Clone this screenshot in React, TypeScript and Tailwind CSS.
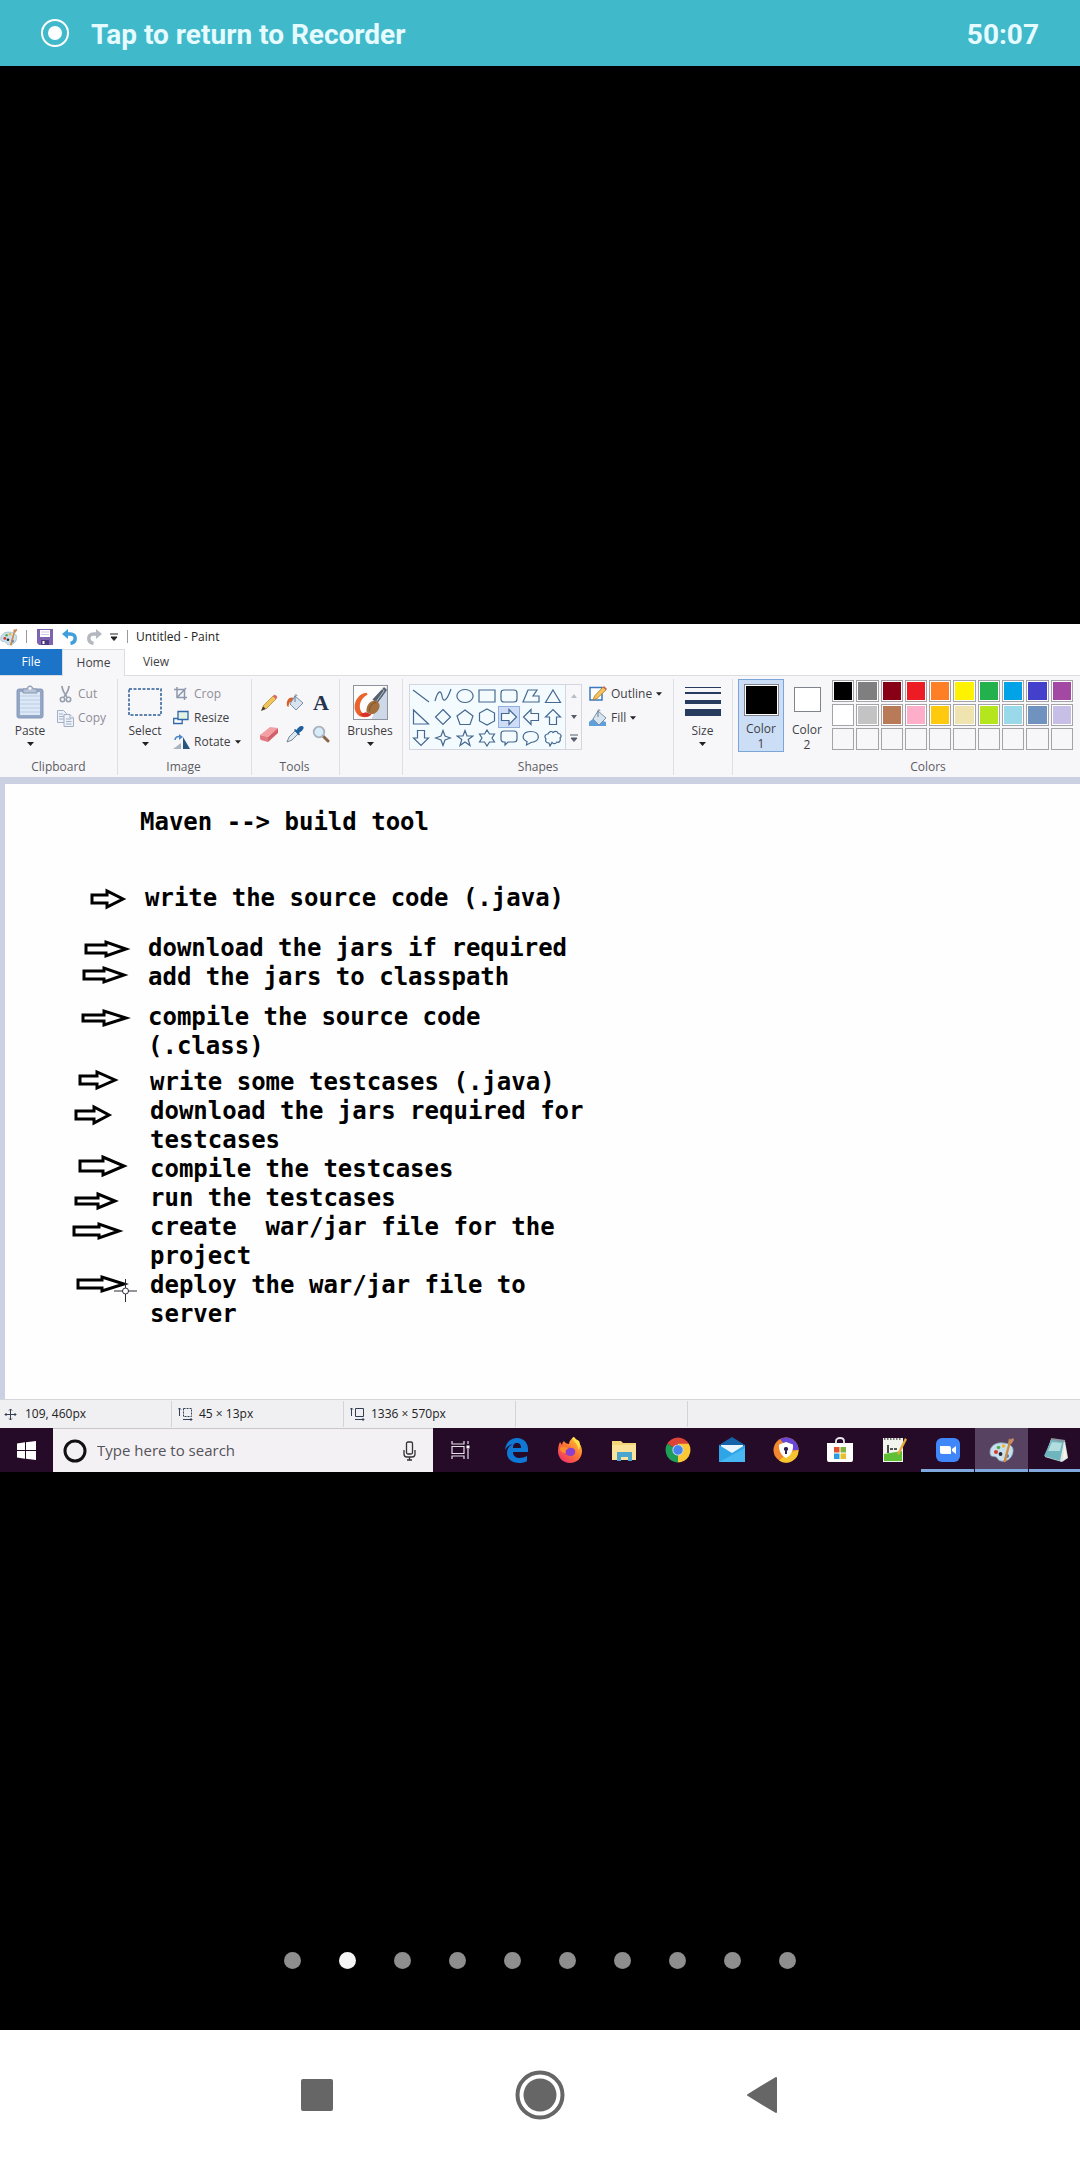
import type { ReactNode } from "react";

const ui = "font-['Open_Sans','Noto_Sans',sans-serif]";

function Caret({ small }: { small?: boolean }) {
  return (
    <svg width={small ? 6 : 7} height="4" viewBox="0 0 7 4" aria-hidden="true" className="shrink-0">
      <path d="M0 0h7L3.5 4z" fill="#222" />
    </svg>
  );
}

function PaletteIcon({ size }: { size: number }) {
  return (
    <svg width={size} height={size} viewBox="0 0 26 26" aria-hidden="true" className="shrink-0">
      <path d="M1 15C1 9 7 5 14 6c7 0 11 4 10 9-1 7-7 10-12 9-3 0-3-3-5-4s-6 1-6-5z" fill="#c9dfee" stroke="#8aa5b8" strokeWidth="0.8" />
      <circle cx="7" cy="15" r="2" fill="#d8372c" />
      <circle cx="9.500" cy="10.500" r="1.800" fill="#4fb04a" />
      <circle cx="14.500" cy="9" r="1.700" fill="#f3b52a" />
      <circle cx="11.500" cy="17" r="1.900" fill="#23272f" />
      <circle cx="18" cy="19" r="2" fill="#3a7fd0" />
      <path d="M14.500 24L19.500 6l2 .6L17 24.500c-.5 1.200-2.500 1-2.500-.5z" fill="#d08a3c" />
      <path d="M19 6.500l1-5 1.500 1L24 1l1 2-2.700 4z" fill="#c98d5b" />
    </svg>
  );
}

function SaveIcon() {
  return (
    <svg width="16" height="16" viewBox="0 0 16 16" aria-hidden="true">
      <path d="M0 0h16v16H2l-2-2z" fill="#7d63b0" />
      <path d="M3 1h10v7H3z" fill="#fff" />
      <path d="M4 3h8M4 5.500h8" stroke="#cfc6e2" />
      <path d="M4 11h8v5H4z" fill="#4e3a80" />
      <path d="M5.500 12h2v3h-2z" fill="#fff" />
    </svg>
  );
}

function UndoIcon() {
  return (
    <svg width="16" height="16" viewBox="0 0 16 16" aria-hidden="true">
      <path d="M4 5h4.500c6 0 6.500 8 0 9.500" fill="none" stroke="#3f9fdc" strokeWidth="3.500" />
      <path d="M0 5l6-5v10z" fill="#3f9fdc" />
    </svg>
  );
}

function RedoIcon() {
  return (
    <svg width="16" height="16" viewBox="0 0 16 16" aria-hidden="true">
      <path d="M12 5H7.500c-6 0-6.500 8 0 9.500" fill="none" stroke="#b4b8bf" strokeWidth="3.500" />
      <path d="M16 5l-6-5v10z" fill="#b4b8bf" />
    </svg>
  );
}

function ClipboardIcon() {
  return (
    <svg width="28" height="34" viewBox="0 0 28 34" aria-hidden="true">
      <rect x="1" y="4" width="26" height="29" rx="2" fill="#93a6c6" stroke="#8799b8" />
      <path d="M4 7h20v23H4z" fill="#dde8f6" />
      <path d="M4 11h20M4 15h20M4 19h20M4 23h20M4 27h20" stroke="#bccce4" />
      <path d="M7 8V4h4c0-4 6-4 6 0h4v4z" fill="#b7c3d7" stroke="#8796b0" />
      <circle cx="14" cy="3.500" r="1.300" fill="#fff" />
    </svg>
  );
}

function CutIcon() {
  return (
    <svg width="17" height="17" viewBox="0 0 17 17" aria-hidden="true" fill="none" stroke="#99a0ad">
      <path d="M5 0c0 4 2 7 5 11M12 0c0 4-2 7-5 11" strokeWidth="1.800" />
      <circle cx="5.500" cy="13.500" r="2.200" strokeWidth="1.600" />
      <circle cx="11.500" cy="13.500" r="2.200" strokeWidth="1.600" />
    </svg>
  );
}

function CopyIcon() {
  return (
    <svg width="17" height="17" viewBox="0 0 17 17" aria-hidden="true" fill="#eef2f9" stroke="#a3aec4">
      <path d="M.5.500h6l3 3v9h-9z" />
      <path d="M2 4h4M2 6.500h5M2 9h5" />
      <path d="M7 4.500h6l3.500 3.500v8.500H7z" />
      <path d="M9 9h5M9 11.500h5.500M9 14h5.500M13 4.500V8h3.500" />
    </svg>
  );
}

function CropIcon() {
  return (
    <svg width="16" height="16" viewBox="0 0 16 16" aria-hidden="true" fill="none" stroke="#8d97ab" strokeWidth="1.500">
      <path d="M4 1v10.500h10M1 3.500h10.500V14M5 10.500l8-8.500" />
    </svg>
  );
}

function ResizeIcon() {
  return (
    <svg width="16" height="16" viewBox="0 0 16 16" aria-hidden="true" stroke="#3267a8" strokeWidth="1.300">
      <path d="M.7 8.500h8.500v5H.7z" fill="#fff" />
      <path d="M5 1.500h10v8H5z" fill="#e2f5e4" />
    </svg>
  );
}

function RotateIcon() {
  return (
    <svg width="17" height="16" viewBox="0 0 17 16" aria-hidden="true">
      <path d="M0 15h8V9z" fill="#a9b4c2" />
      <path d="M10 15h7L10 3z" fill="#27577f" />
      <path d="M2 6c0-3 3-4 5-3" fill="none" stroke="#4f86c6" strokeWidth="1.500" />
      <path d="M6 0l4 3-4 3z" fill="#4f86c6" />
    </svg>
  );
}

function PencilIcon() {
  return (
    <svg width="18" height="18" viewBox="0 0 18 18" aria-hidden="true">
      <path d="M1 17l2-5 3 3z" fill="#4d3b29" />
      <path d="M3 12L13 2l3 3L6 15z" fill="#f2c55c" stroke="#b98b33" strokeWidth="0.800" />
      <path d="M13 2l1-1c1-1 4 2 3 3l-1 1z" fill="#d9666b" />
    </svg>
  );
}

function BucketIcon({ tray }: { tray?: boolean }) {
  return (
    <svg width="18" height="18" viewBox="0 0 18 18" aria-hidden="true">
      {tray && <path d="M0 13l5-4 12 4v4H0z" fill="#5f9fdc" />}
      {!tray && <path d="M1 12C0 6 3 2 8 4L5 8C3 8 3 10 2.500 13z" fill="#d9622b" />}
      <path d="M9 2l8 7-7 7-6-6z" fill="#d7e4ef" stroke="#7890a8" />
      <path d="M9 8V1.500c0-1 2-1 2 .5" fill="none" stroke="#6b7d90" />
    </svg>
  );
}

function EraserIcon() {
  return (
    <svg width="18" height="18" viewBox="0 0 18 18" aria-hidden="true">
      <path d="M0 10l10-8 8 1-10 9z" fill="#f3a0a4" />
      <path d="M0 10l8 2v5l-7-2c-1 0-1-3-1-5z" fill="#e27880" />
      <path d="M8 12L18 3v5l-10 9z" fill="#d4606a" />
    </svg>
  );
}

function PickerIcon() {
  return (
    <svg width="18" height="18" viewBox="0 0 18 18" aria-hidden="true">
      <path d="M1 17l2-5 6-6 3 3-6 6z" fill="#dce8f2" stroke="#7b8794" />
      <path d="M8 5l1-1 1.500 1C12 2 15 0 17 1.500S16 6 13 8l1 1.500-1 1z" fill="#1f5f9e" />
    </svg>
  );
}

function MagnifierIcon() {
  return (
    <svg width="18" height="18" viewBox="0 0 18 18" aria-hidden="true">
      <path d="M11 11l5 5" stroke="#8a6648" strokeWidth="3" strokeLinecap="round" />
      <circle cx="7" cy="7" r="5.300" fill="#d8ebf8" stroke="#a9b2bd" strokeWidth="1.800" />
    </svg>
  );
}

function BrushIcon() {
  return (
    <svg width="33" height="33" viewBox="0 0 34 34" aria-hidden="true">
      <rect width="34" height="34" fill="#fdfdfe" />
      <path d="M34 0v34H18l8-18z" fill="#cdd8e8" />
      <path d="M13 7C3 8-2 20 2 27s12 6 15 3c-7 0-11-3-11-9S10 11 14 9z" fill="#e9642c" />
      <path d="M6 29c4 4 10 3 12 0l-6-2z" fill="#d9302c" />
      <path d="M31 1l3 3-10 14-5-4z" fill="#56616f" />
      <path d="M29 3l2 2-8 11" stroke="#b9c4d0" fill="none" />
      <path d="M13 27c-1-7 4-13 10-12 5 3 4 9 0 12-3 3-7 2-10 0z" fill="#a3703d" />
      <path d="M16 26c0-5 3-9 7-9" stroke="#7b4f27" fill="none" />
    </svg>
  );
}

function OutlineIcon() {
  return (
    <svg width="18" height="18" viewBox="0 0 18 18" aria-hidden="true">
      <path d="M1 2.500h12V15H1z" fill="#fff" stroke="#3a79bd" strokeWidth="1.500" />
      <path d="M4 15l1.500-4L14 2l3 3-9 8.500z" fill="#f2c55c" stroke="#a8792c" strokeWidth="0.800" />
      <path d="M14 2l1-1 3 3-1 1z" fill="#cf5a60" />
    </svg>
  );
}

const shapes: { name: string; d: string }[] = [
  { name: "Line", d: "M1 3l16 12" },
  { name: "Curve", d: "M1 14C4 3 7 3 8 9s4 7 9-7" },
  { name: "Oval", d: "M9 2.500a8 6.500 0 1 0 .01 0z" },
  { name: "Rectangle", d: "M1 3h16v12H1z" },
  { name: "Rounded rectangle", d: "M4 3h10q3 0 3 3v6q0 3-3 3H4q-3 0-3-3V6q0-3 3-3z" },
  { name: "Polygon", d: "M6 3h9l-4 6h6v6H1z" },
  { name: "Triangle", d: "M9 3l7.500 12.500h-15z" },
  { name: "Right triangle", d: "M1.500 2v14h15z" },
  { name: "Diamond", d: "M9 1.500l7.500 7.500L9 16.500 1.500 9z" },
  { name: "Pentagon", d: "M9 2l8 6-3 8.500H4L1 8z" },
  { name: "Hexagon", d: "M9 1l7.500 4v8L9 17l-7.500-4V5z" },
  { name: "Right arrow", d: "M1.500 5.500H9V1.500L16.500 9 9 16.500v-4H1.500z" },
  { name: "Left arrow", d: "M16.500 5.500H9V1.500L1.500 9 9 16.500v-4h7.500z" },
  { name: "Up arrow", d: "M5.500 16.500V9H1.500L9 1.500 16.500 9h-4v7.500z" },
  { name: "Down arrow", d: "M5.500 1.500V9H1.500L9 16.500 16.500 9h-4V1.500z" },
  { name: "Four-point star", d: "M9 1.500l2 5.500 5.500 2-5.500 2-2 5.500L7 11 1.500 9 7 7z" },
  { name: "Five-point star", d: "M9 1.500l2 5.500h6l-4.800 3.500 1.800 6L9 13l-5 3.500 1.800-6L1 7h6z" },
  { name: "Six-point star", d: "M9 1l2.500 4H16.500L14 9l2.500 4h-5L9 17l-2.500-4h-5L4 9 1.500 5h5z" },
  { name: "Rounded callout", d: "M4 2h10q3 0 3 3v5q0 3-3 3H8l-3 3v-3H4q-3 0-3-3V5q0-3 3-3z" },
  { name: "Oval callout", d: "M5 12.500C-1 10 0 2.500 9 2.500s10.500 10 0 11L4.500 16z" },
  { name: "Cloud callout", d: "M5 14c-3 0-4-2-3-4C0 8 1 5 4 5c1-3 4-3 5-1.500C12 1 14 3 14 4.500c3 0 4 3 2 4.500 1 3-1 5-3 4-1 2-4 2-5 .5L6 17z" },
];

function ShapeGallery() {
  return (
    <div className="flex h-[66px] border border-[#d3d6df] bg-[#f4fbff]">
      <div className="grid grid-cols-7 grid-rows-3">
        {shapes.map((s) => (
          <button
            key={s.name}
            type="button"
            aria-label={s.name}
            className={
              s.name === "Right arrow"
                ? "flex w-[22px] items-center justify-center bg-[#cfdcf8] outline outline-[#8fb0dc] -outline-offset-1"
                : "flex w-[22px] items-center justify-center"
            }
          >
            <svg width="18" height="18" viewBox="0 0 18 18" aria-hidden="true">
              <path d={s.d} fill={s.name === "Line" || s.name === "Curve" ? "none" : "#f4fbff"} stroke="#44688f" strokeWidth="1.200" />
            </svg>
          </button>
        ))}
      </div>
      <div className="ml-px flex w-[16px] flex-col border-l border-[#d3d6df] bg-[#f7f7fa]">
        <button type="button" aria-label="Scroll shapes up" className="flex flex-1 items-center justify-center">
          <svg width="6" height="4" viewBox="0 0 6 4"><path d="M0 4h6L3 0z" fill="#b9bcc4" /></svg>
        </button>
        <button type="button" aria-label="Scroll shapes down" className="flex flex-1 items-center justify-center">
          <svg width="6" height="4" viewBox="0 0 6 4"><path d="M0 0h6L3 4z" fill="#555c6b" /></svg>
        </button>
        <button type="button" aria-label="More shapes" className="flex flex-1 items-center justify-center">
          <svg width="8" height="8" viewBox="0 0 8 8"><path d="M0 1h8M1 4h6L4 7.500z" fill="#555c6b" stroke="#555c6b" /></svg>
        </button>
      </div>
    </div>
  );
}

function Group({ label, className, labelClass = "", children }: { label?: string; className: string; labelClass?: string; children: ReactNode }) {
  return (
    <section aria-label={label} className={`flex h-[96px] flex-col justify-between ${className}`}>
      <div className="flex items-start">{children}</div>
      {label && <h2 className={`text-center text-[12px] leading-4 text-[#5b5b60] ${labelClass}`}>{label}</h2>}
    </section>
  );
}

function BigButton({ icon, label, className }: { icon: ReactNode; label: string; className: string }) {
  return (
    <button type="button" className={`flex flex-col items-center pt-[5px] ${className}`}>
      <span className="flex h-[36px] items-center">{icon}</span>
      <span className="mt-[3px] leading-4">{label}</span>
      <span className="flex h-[10px] items-center"><Caret /></span>
    </button>
  );
}

function SmallButton({ icon, label, caret, disabled }: { icon: ReactNode; label: string; caret?: boolean; disabled?: boolean }) {
  return (
    <button
      type="button"
      disabled={disabled}
      className={disabled ? "flex h-[24px] items-center gap-1 text-[#8e8e96]" : "flex h-[24px] items-center gap-1"}
    >
      <span className="flex w-[18px] justify-center">{icon}</span>
      {label}
      {caret && <Caret small />}
    </button>
  );
}

const palette = [
  ["Black", "bg-[#000000]"], ["Gray", "bg-[#7f7f7f]"], ["Dark red", "bg-[#880015]"], ["Red", "bg-[#ed1c24]"], ["Orange", "bg-[#ff7f27]"],
  ["Yellow", "bg-[#fff200]"], ["Green", "bg-[#22b14c]"], ["Turquoise", "bg-[#00a2e8]"], ["Indigo", "bg-[#4340cc]"], ["Purple", "bg-[#a349a4]"],
  ["White", "bg-[#ffffff]"], ["Light gray", "bg-[#c3c3c3]"], ["Brown", "bg-[#b97a57]"], ["Rose", "bg-[#ffaec9]"], ["Gold", "bg-[#ffc90e]"],
  ["Light yellow", "bg-[#efe4b0]"], ["Lime", "bg-[#b5e61d]"], ["Light turquoise", "bg-[#99d9ea]"], ["Blue-gray", "bg-[#7092be]"], ["Lavender", "bg-[#c8bfe7]"],
];

function Ribbon() {
  return (
    <div className="flex h-[102px] overflow-hidden border-t border-[#dcdde2] bg-[#f7f7fa] pt-[3px] text-[12px] text-[#3f3f44]">
      <Group label="Clipboard" className="w-[118px] shrink-0 border-r border-[#dedfe5]">
        <BigButton icon={<ClipboardIcon />} label="Paste" className="ml-[12px] w-[36px]" />
        <div className="ml-[8px] flex flex-col pt-[3px]">
          <SmallButton icon={<CutIcon />} label="Cut" disabled />
          <SmallButton icon={<CopyIcon />} label="Copy" disabled />
        </div>
      </Group>
      <Group label="Image" className="w-[134px] shrink-0 border-r border-[#dedfe5]" labelClass="pr-[2px]">
        <BigButton
          icon={<svg width="34" height="28" viewBox="0 0 34 28"><path d="M1 1h32v26H1z" fill="none" stroke="#2d5e96" strokeWidth="1.500" strokeDasharray="3 1.500" /></svg>}
          label="Select"
          className="ml-[6px] w-[42px]"
        />
        <div className="ml-[6px] flex flex-col pt-[3px]">
          <SmallButton icon={<CropIcon />} label="Crop" disabled />
          <SmallButton icon={<ResizeIcon />} label="Resize" />
          <SmallButton icon={<RotateIcon />} label="Rotate" caret />
        </div>
      </Group>
      <Group label="Tools" className="w-[88px] shrink-0 border-r border-[#dedfe5]" labelClass="pr-[2px]">
        <div className="grid w-full grid-cols-3 pr-[5px] pl-[4px] pt-[8px]">
          <button type="button" aria-label="Pencil" className="flex h-[31px] items-center justify-center"><PencilIcon /></button>
          <button type="button" aria-label="Fill with color" className="flex h-[31px] items-center justify-center"><BucketIcon /></button>
          <button type="button" aria-label="Text" className="flex h-[31px] items-center justify-center font-['Liberation_Serif',serif] text-[22px] font-bold text-[#24344d]">A</button>
          <button type="button" aria-label="Eraser" className="flex h-[31px] items-center justify-center"><EraserIcon /></button>
          <button type="button" aria-label="Color picker" className="flex h-[31px] items-center justify-center"><PickerIcon /></button>
          <button type="button" aria-label="Magnifier" className="flex h-[31px] items-center justify-center"><MagnifierIcon /></button>
        </div>
      </Group>
      <Group className="w-[63px] shrink-0 border-r border-[#dedfe5]">
        <BigButton icon={<span className="border border-[#8f949e]"><BrushIcon /></span>} label="Brushes" className="w-[60px]" />
      </Group>
      <Group label="Shapes" className="w-[271px] shrink-0 border-r border-[#dedfe5]">
        <div className="ml-[6px] pt-[5px]"><ShapeGallery /></div>
        <div className="ml-[7px] flex flex-col pt-[3px]">
          <SmallButton icon={<OutlineIcon />} label="Outline" caret />
          <SmallButton icon={<BucketIcon tray />} label="Fill" caret />
        </div>
      </Group>
      <Group className="w-[59px] shrink-0 border-r border-[#dedfe5]">
        <BigButton
          icon={<svg width="36" height="32" viewBox="0 0 36 32" fill="#263b5e"><path d="M0 1h36v1H0zM0 6h36v2H0zM0 14h36v4H0zM0 23h36v7H0z" /></svg>}
          label="Size"
          className="w-[57px]"
        />
      </Group>
      <Group label="Colors" className="min-w-0 flex-1" labelClass="pl-[43px]">
        <button type="button" className="ml-[5px] flex h-[73px] w-[46px] flex-col items-center border border-[#7ba7d8] bg-[#cbdef5] pt-[4px] leading-[15px]">
          <span className="mb-[5px] size-[35px] border border-[#80848c] bg-black outline outline-white -outline-offset-2" />
          <span>Color</span>
          <span>1</span>
        </button>
        <button type="button" className="flex h-[73px] w-[46px] flex-col items-center pt-[8px] leading-[15px]">
          <span className="mb-[10px] size-[27px] border border-[#80848c] bg-white" />
          <span>Color</span>
          <span>2</span>
        </button>
        <div className="ml-[2px] grid w-[241px] grid-cols-10 gap-[2px] pt-px">
          {palette.map(([name, color]) => (
            <button key={name} type="button" aria-label={name} className="h-[22px] border border-[#a4a4a8] bg-white p-px">
              <span className={`block h-full ${color}`} />
            </button>
          ))}
          {Array.from({ length: 10 }, (_, i) => (
            <button key={i} type="button" aria-label={`Custom color ${i + 1}`} className="h-[22px] border border-[#a4a4a8] bg-[#f7f7fa]" />
          ))}
        </div>
      </Group>
    </div>
  );
}

/* Block arrows on the drawing: tail x, head x, tip x, centre y, half shaft, half head. */
const arrows = [
  [87, 102, 118, 115, 4, 8],
  [81, 101, 121, 165, 4, 7],
  [79, 99, 119, 191, 4, 7],
  [78, 99, 121, 234, 3, 7],
  [75, 92, 110, 296, 4, 8],
  [71, 89, 104, 331, 4, 8],
  [75, 98, 119, 382, 5, 9],
  [71, 93, 110, 417, 3, 7],
  [69, 94, 114, 447, 4, 7],
  [73, 97, 119, 500, 4, 7],
];

function Canvas() {
  return (
    <main className="bg-[#cbd0e2] pt-[7px] pl-[5px]">
      <div className="relative h-[615px] overflow-hidden bg-[#fefefe] pt-[24px] font-['DejaVu_Sans_Mono','Liberation_Mono',monospace] text-[24px] leading-[29px] font-bold whitespace-pre text-black">
        <p className="pl-[135px]">Maven --&gt; build tool</p>
        <p className="mt-[47px] pl-[140px]">write the source code (.java)</p>
        <div className="mt-[21px] pl-[143px]">
          <p>download the jars if required</p>
          <p>add the jars to classpath</p>
        </div>
        <div className="mt-[11px] pl-[143px]">
          <p>compile the source code</p>
          <p>(.class)</p>
        </div>
        <div className="mt-[7px] pl-[145px]">
          <p>write some testcases (.java)</p>
          <p>download the jars required for</p>
          <p>testcases</p>
          <p>compile the testcases</p>
          <p>run the testcases</p>
          <p>create  war/jar file for the</p>
          <p>project</p>
          <p>deploy the war/jar file to</p>
          <p>server</p>
        </div>
        <svg width="160" height="560" viewBox="0 0 160 560" aria-hidden="true" className="absolute top-0 left-0">
          {arrows.map(([tail, head, tip, y, s, h]) => (
            <path
              key={y}
              d={`M${tail} ${y - s}H${head}V${y - h}L${tip} ${y}L${head} ${y + h}V${y + s}H${tail}Z`}
              fill="none"
              stroke="#000"
              strokeWidth="3"
            />
          ))}
          <g stroke="#2b2b38" fill="#fff">
            <path d="M109 507h23M120.500 495v23" />
            <circle cx="120.500" cy="507" r="3" />
          </g>
        </svg>
      </div>
    </main>
  );
}

function StatusBar() {
  return (
    <footer className="flex h-[29px] items-center overflow-hidden border-t border-[#d5d5da] bg-[#f0f0f3] text-[12px] text-[#222]">
      <div className="flex h-[26px] w-[172px] shrink-0 items-center gap-[8px] border-r border-[#d3d3d8] pl-[4px]">
        <svg width="13" height="13" viewBox="0 0 13 13" aria-hidden="true" fill="none" stroke="#333f55">
          <path d="M6.500 1v11M1 6.500h11M5 2.500L6.500 1 8 2.500M5 10.500L6.500 12 8 10.500M2.500 5L1 6.500 2.500 8M10.500 5L12 6.500 10.500 8" />
        </svg>
        109, 460px
      </div>
      <div className="flex h-[26px] w-[172px] shrink-0 items-center gap-[6px] border-r border-[#d3d3d8] pl-[6px]">
        <svg width="15" height="14" viewBox="0 0 15 14" aria-hidden="true" fill="none" stroke="#333f55">
          <path d="M1.500 9V1M0 2.500L1.500 1 3 2.500M5 12.500h9M12.500 11l1.500 1.500-1.500 1.500" />
          <path d="M5.500 1.500h8v8h-8z" strokeDasharray="2 1" />
        </svg>
        45 × 13px
      </div>
      <div className="flex h-[26px] w-[172px] shrink-0 items-center gap-[6px] border-r border-[#d3d3d8] pl-[6px]">
        <svg width="15" height="14" viewBox="0 0 15 14" aria-hidden="true" fill="none" stroke="#333f55">
          <path d="M1.500 9V1M0 2.500L1.500 1 3 2.500M5 12.500h9M12.500 11l1.500 1.500-1.500 1.500M5.500 1.500h8v8h-8z" />
        </svg>
        1336 × 570px
      </div>
      <div className="h-[26px] w-[172px] shrink-0 border-r border-[#d3d3d8]" />
    </footer>
  );
}

const apps: { name: string; state: string; icon: ReactNode }[] = [
  {
    name: "Edge", state: "border-transparent",
    icon: <path d="M2 13C3 4 9 1 14 1c7 0 11 5 11 11v3H10c0 4 3 6 7 6 2 0 5-1 7-2v5c-2 1.500-5 2-8 2-7 0-12-4-12-10 0-4 2-7 6-9-4 1-6 3-8 6zm8-2h8c0-3-1-5-4-5s-4 2-4 5z" fill="#0f78d4" />,
  },
  {
    name: "Firefox", state: "border-transparent",
    icon: (
      <>
        <path d="M1 14c0-4 1-7 2-9l2 3c0-2 1-3 2-4 1 2 3 3 5 3 0-3 2-5 5-7 1 3 8 6 8 14 0 7-5 12-12 12S1 21 1 14z" fill="url(#fox)" />
        <path d="M15 1c1 3 7 6 6 12 3-3 2-7 1-9-1-1-4-2-5-4z" fill="#ffe14a" />
        <path d="M8 15c0-4 3-5 6-4 3 0 5 2 4 5-1 4-9 4-10-1z" fill="#8c3ecf" />
        <path d="M3 11c3-2 6-1 9 1-3 0-4 2-3 4-4 0-6-2-6-5z" fill="#ff8f2a" />
      </>
    ),
  },
  {
    name: "File Explorer", state: "border-transparent",
    icon: (
      <>
        <path d="M1 4h9l2 2h13v17H1z" fill="#f5d57a" />
        <path d="M1 8h24v15H1z" fill="#fbe39a" />
        <path d="M6 15h15v9h-4v-4h-7v4H6z" fill="#4ba6cf" />
      </>
    ),
  },
  {
    name: "Chrome", state: "border-transparent",
    icon: (
      <>
        <path d="M13 13L2.200 6.800A12.500 12.500 0 0 1 23.800 6.800z" fill="#db4437" />
        <path d="M2.200 6.800L13 13l0 12.500A12.500 12.500 0 0 1 2.200 6.800z" fill="#1e9e58" />
        <path d="M23.800 6.800H13V13l0 12.500A12.500 12.500 0 0 0 23.800 6.800z" fill="#fbc735" />
        <circle cx="13" cy="13" r="5.600" fill="#c8d8ee" />
        <circle cx="13" cy="13" r="4.700" fill="#4684f0" />
      </>
    ),
  },
  {
    name: "Mail", state: "border-transparent",
    icon: (
      <>
        <path d="M0 8L13 0l13 8v8H0z" fill="#1462a8" />
        <path d="M2 8h22v8H2z" fill="#e8f5fd" />
        <path d="M0 8l13 8 13-8v17H0z" fill="#2fa4e7" />
        <path d="M0 25l26-14v14z" fill="#48b8f2" />
      </>
    ),
  },
  {
    name: "Secure Browser", state: "border-transparent",
    icon: (
      <>
        <circle cx="13" cy="13" r="12.500" fill="#f2872f" />
        <path d="M7 2A12.500 12.500 0 0 1 25.500 13H16z" fill="#6a48d7" />
        <path d="M25.500 13A12.500 12.500 0 0 1 6 23.500L15 16z" fill="#f7c52e" />
        <path d="M13 5l7 2.500c.5 6-2 11-7 13.500-5-2.500-7.500-7.500-7-13.500z" fill="#fff" />
        <path d="M13 10a2 2 0 0 1 1 3.800V17h-2v-3.200A2 2 0 0 1 13 10z" fill="#2f2353" />
      </>
    ),
  },
  {
    name: "Microsoft Store", state: "border-transparent",
    icon: (
      <>
        <path d="M0 6h26v17q0 2-2 2H2q-2 0-2-2z" fill="#fff" />
        <path d="M9 7V4c0-4 8-4 8 0v3" fill="none" stroke="#e8e8ee" strokeWidth="1.800" />
        <path d="M7 10h5.500v5.500H7z" fill="#e2512d" />
        <path d="M13.500 10H19v5.500h-5.500z" fill="#80b43a" />
        <path d="M7 16.500h5.500V22H7z" fill="#2a9fdd" />
        <path d="M13.500 16.500H19V22h-5.500z" fill="#e8c02a" />
      </>
    ),
  },
  {
    name: "Notepad++", state: "border-transparent",
    icon: (
      <>
        <path d="M2 1h20v24H2z" fill="#f1f5ee" />
        <path d="M3 17l18-3v10H3z" fill="#5fbf35" />
        <path d="M3 2h18" stroke="#777" strokeDasharray="1.500 1.500" strokeWidth="2" />
        <path d="M7 8v8M9 12h3M13 12h3" stroke="#222" strokeWidth="1.600" />
        <path d="M16 17L24 1l2 1.500L18 18z" fill="#e5a83b" />
      </>
    ),
  },
  {
    name: "Zoom", state: "border-[#7fa8dc]",
    icon: (
      <>
        <rect x="1" y="1" width="24" height="24" rx="6" fill="#4087fc" />
        <path d="M5 9h9q2 0 2 2v6H7q-2 0-2-2zM17 12l4-3v8l-4-3z" fill="#fff" />
      </>
    ),
  },
  { name: "Paint", state: "border-[#7fa8dc] bg-[#574262]", icon: null },
  {
    name: "Notepad", state: "border-[#7fa8dc]",
    icon: (
      <>
        <path d="M8 2l14 2 3 17-6 4-17-5z" fill="#d9e5e8" />
        <path d="M8 3l13 1-4 20L1 19z" fill="#6fb5bd" />
        <path d="M9 5l10 1-2 8-12 0z" fill="#b4dde0" />
        <path d="M8 2l14 2" stroke="#8b979c" strokeWidth="2" />
        <path d="M21 6l3 14-4 3z" fill="#f7f4df" />
      </>
    ),
  },
];

function Taskbar() {
  return (
    <nav aria-label="Taskbar" className="flex h-[44px] overflow-hidden bg-[#260b29]">
      <button type="button" aria-label="Start" className="flex w-[53px] shrink-0 items-center justify-center">
        <svg width="19" height="19" viewBox="0 0 19 19" fill="#fff"><path d="M0 2.500l8-1.200v7.700H0zM9 1.200L19 0v9H9zM0 10h8v7.700l-8-1.200zM9 10h10v9L9 17.800z" /></svg>
      </button>
      <label className="flex w-[380px] shrink-0 items-center border-t border-[#c9c6cd] bg-[#f3f1f4] pr-[17px] pl-[10px]">
        <svg width="24" height="24" viewBox="0 0 24 24" aria-hidden="true" className="shrink-0"><circle cx="12" cy="12" r="10" fill="none" stroke="#111" strokeWidth="3" /></svg>
        <input type="text" aria-label="Search" placeholder="Type here to search" className="ml-[10px] min-w-0 flex-1 bg-transparent text-[15px] outline-none placeholder:text-[#55535a]" />
        <svg width="13" height="20" viewBox="0 0 13 20" aria-hidden="true" fill="none" stroke="#333" strokeWidth="1.300"><rect x="3.500" y="1" width="6" height="12" rx="1.500" /><path d="M1 9v4q0 3 3 3h5q3 0 3-3V9M6.500 16v3M4 19h5" /></svg>
      </label>
      <button type="button" aria-label="Task View" className="flex w-[56px] shrink-0 items-center justify-center pr-[2px]">
        <svg width="19" height="18" viewBox="0 0 19 18" fill="none" stroke="#e5dfe8" strokeWidth="1.200"><path d="M1 0v3h12V0M1 18v-3h12v3M1 5.500h12v7H1zM17 0v3M17 8v10" /><path d="M15.500 4.500h3v3h-3z" fill="#fff" stroke="none" /></svg>
      </button>
      {apps.map((app) => (
        <button
          key={app.name}
          type="button"
          aria-label={app.name}
          className={`mr-px flex w-[53px] shrink-0 items-center justify-center border-b-[3px] pt-[2px] ${app.state}`}
        >
          {app.icon ? (
            <svg width="26" height="26" viewBox="0 0 26 26">
              <defs>
                <linearGradient id="fox" x1="1" y1="0" x2="0.200" y2="1">
                  <stop offset="0" stopColor="#ffdc3e" />
                  <stop offset="0.500" stopColor="#ff7a2f" />
                  <stop offset="1" stopColor="#f0316a" />
                </linearGradient>
              </defs>
              {app.icon}
            </svg>
          ) : (
            <PaletteIcon size={26} />
          )}
        </button>
      ))}
    </nav>
  );
}

export default function App() {
  return (
    <div className="flex min-h-screen flex-col bg-black">
      <button type="button" className="flex h-[66px] items-center bg-[#40b9ca] pr-[41px] pl-[41px] font-['Roboto',sans-serif] text-[28px] font-bold text-[#e6fbff]">
        <svg width="28" height="28" viewBox="0 0 28 28" aria-hidden="true"><circle cx="14" cy="14" r="13" fill="none" stroke="#fff" strokeWidth="2" /><circle cx="14" cy="14" r="7" fill="#fff" /></svg>
        <span className="ml-[22px] pt-[3px]">Tap to return to Recorder</span>
        <span className="ml-auto pt-[3px]">50:07</span>
      </button>

      <div className="grid flex-1 grid-cols-1 grid-rows-[1fr_auto_1fr]">
        <div />
        <div className={`${ui} min-w-0 bg-white`}>
          <header className="flex h-[25px] items-center text-[12px] text-[#222]">
            <PaletteIcon size={18} />
            <span className="ml-[8px] h-[13px] w-px bg-[#999]" />
            <button type="button" aria-label="Save" className="ml-[10px]"><SaveIcon /></button>
            <button type="button" aria-label="Undo" className="ml-[9px]"><UndoIcon /></button>
            <button type="button" aria-label="Redo" className="ml-[8px]"><RedoIcon /></button>
            <button type="button" aria-label="Customize toolbar" className="ml-[8px]">
              <svg width="8" height="8" viewBox="0 0 8 8"><path d="M0 1h8M1 4h6L4 7.500z" fill="#222" stroke="#222" /></svg>
            </button>
            <span className="ml-[9px] h-[13px] w-px bg-[#999]" />
            <h1 className="ml-[8px]">Untitled - Paint</h1>
          </header>
          <div role="tablist" className="flex h-[26px] text-[12px] text-[#3f3f44]">
            <button type="button" role="tab" aria-selected="false" className="w-[62px] bg-[#1c74c9] text-white">File</button>
            <button type="button" role="tab" aria-selected="true" className="relative -mb-px w-[63px] border-x border-t border-[#dcdde2] bg-[#f7f7fa]">Home</button>
            <button type="button" role="tab" aria-selected="false" className="w-[62px]">View</button>
          </div>
          <Ribbon />
          <Canvas />
          <StatusBar />
          <Taskbar />
        </div>
        <div className="flex items-end justify-center gap-[38px] pb-[61px]">
          {Array.from({ length: 10 }, (_, i) => (
            <button key={i} type="button" aria-label={`Page ${i + 1}`} className={i === 1 ? "size-[17px] rounded-full bg-[#f5f5f5]" : "size-[17px] rounded-full bg-[#8e8e8e]"} />
          ))}
        </div>
      </div>

      <nav aria-label="System navigation" className="flex h-[130px] items-center justify-center gap-[182px] bg-white">
        <button type="button" aria-label="Recent apps"><svg width="32" height="32" viewBox="0 0 32 32"><rect width="32" height="32" rx="2" fill="#666" /></svg></button>
        <button type="button" aria-label="Home"><svg width="50" height="50" viewBox="0 0 50 50"><circle cx="25" cy="25" r="22.500" fill="none" stroke="#666" strokeWidth="4" /><circle cx="25" cy="25" r="16.500" fill="#666" /></svg></button>
        <button type="button" aria-label="Back"><svg width="32" height="36" viewBox="0 0 32 36"><path d="M1 18L29 1v34z" fill="#666" stroke="#666" strokeWidth="2" strokeLinejoin="round" /></svg></button>
      </nav>
    </div>
  );
}
